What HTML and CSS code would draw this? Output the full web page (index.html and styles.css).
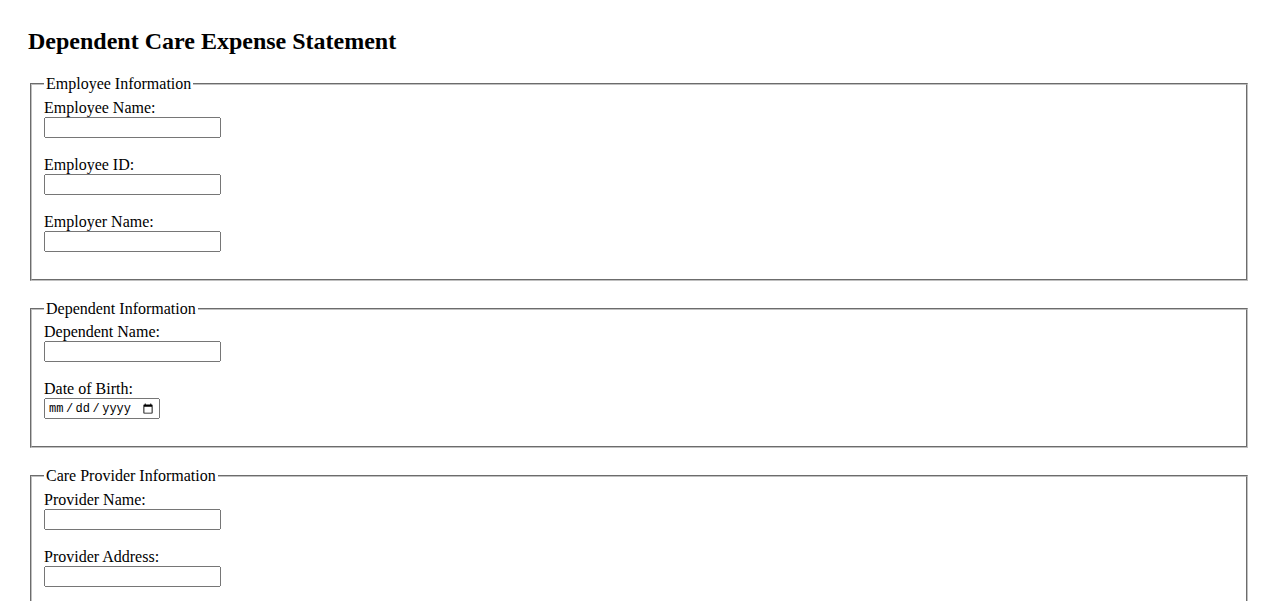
FILE: index.html
```html
<!DOCTYPE html>
<html>
<head>
<meta charset="utf-8">
<title>Dependent Care Expense Statement</title>
<link rel="stylesheet" href="styles.css">
</head>
<body class="page">
<h2 class="title">Dependent Care Expense Statement</h2>
<form class="form">
  <fieldset class="group">
    <legend class="group-legend">Employee Information</legend>
    <label class="field-label" for="empName">Employee Name:</label><br>
    <input class="text-input" type="text" id="empName"><br><br>
    <label class="field-label" for="empId">Employee ID:</label><br>
    <input class="text-input" type="text" id="empId"><br><br>
    <label class="field-label" for="employer">Employer Name:</label><br>
    <input class="text-input" type="text" id="employer"><br><br>
  </fieldset>
  <fieldset class="group">
    <legend class="group-legend">Dependent Information</legend>
    <label class="field-label" for="depName">Dependent Name:</label><br>
    <input class="text-input" type="text" id="depName"><br><br>
    <label class="field-label" for="dob">Date of Birth:</label><br>
    <input class="date-input" type="date" id="dob"><br><br>
  </fieldset>
  <fieldset class="group">
    <legend class="group-legend">Care Provider Information</legend>
    <label class="field-label" for="provName">Provider Name:</label><br>
    <input class="text-input" type="text" id="provName"><br><br>
    <label class="field-label" for="provAddr">Provider Address:</label><br>
    <input class="text-input" type="text" id="provAddr"><br><br>
    <label class="field-label" for="provTax">Provider Tax ID:</label><br>
    <input class="text-input" type="text" id="provTax"><br><br>
  </fieldset>
</form>
</body>
</html>
```
FILE: styles.css
```css
.page {
  margin: 8px;
  padding: 20px;
  font-family: "Liberation Serif", "Times New Roman", serif;
  font-size: 16px;
  color: #000;
  background: #fff;
}

.title {
  margin: 0 0 20px 0;
  font-size: 24px;
  font-weight: bold;
}

.form {
  margin: 0;
}

.group {
  margin: 0 2px 19px 2px;
  padding: 0.35em 0.75em 9px;
  border: 2px groove rgb(192, 192, 192);
}

.group-legend {
  padding: 0 2px;
}

.text-input {
  box-sizing: border-box;
  width: 177px;
  height: 21px;
  font-family: "Liberation Sans", Arial, sans-serif;
  font-size: 13.33px;
  margin: 0;
}

.date-input {
  box-sizing: border-box;
  width: 116px;
  height: 21px;
  font-family: "Liberation Mono", "DejaVu Sans Mono", monospace;
  font-size: 12px;
  margin: 0;
  padding: 1px 2px;
  vertical-align: top;
}

.date-input::-webkit-datetime-edit-text {
  padding: 0 1.5px;
}
```
